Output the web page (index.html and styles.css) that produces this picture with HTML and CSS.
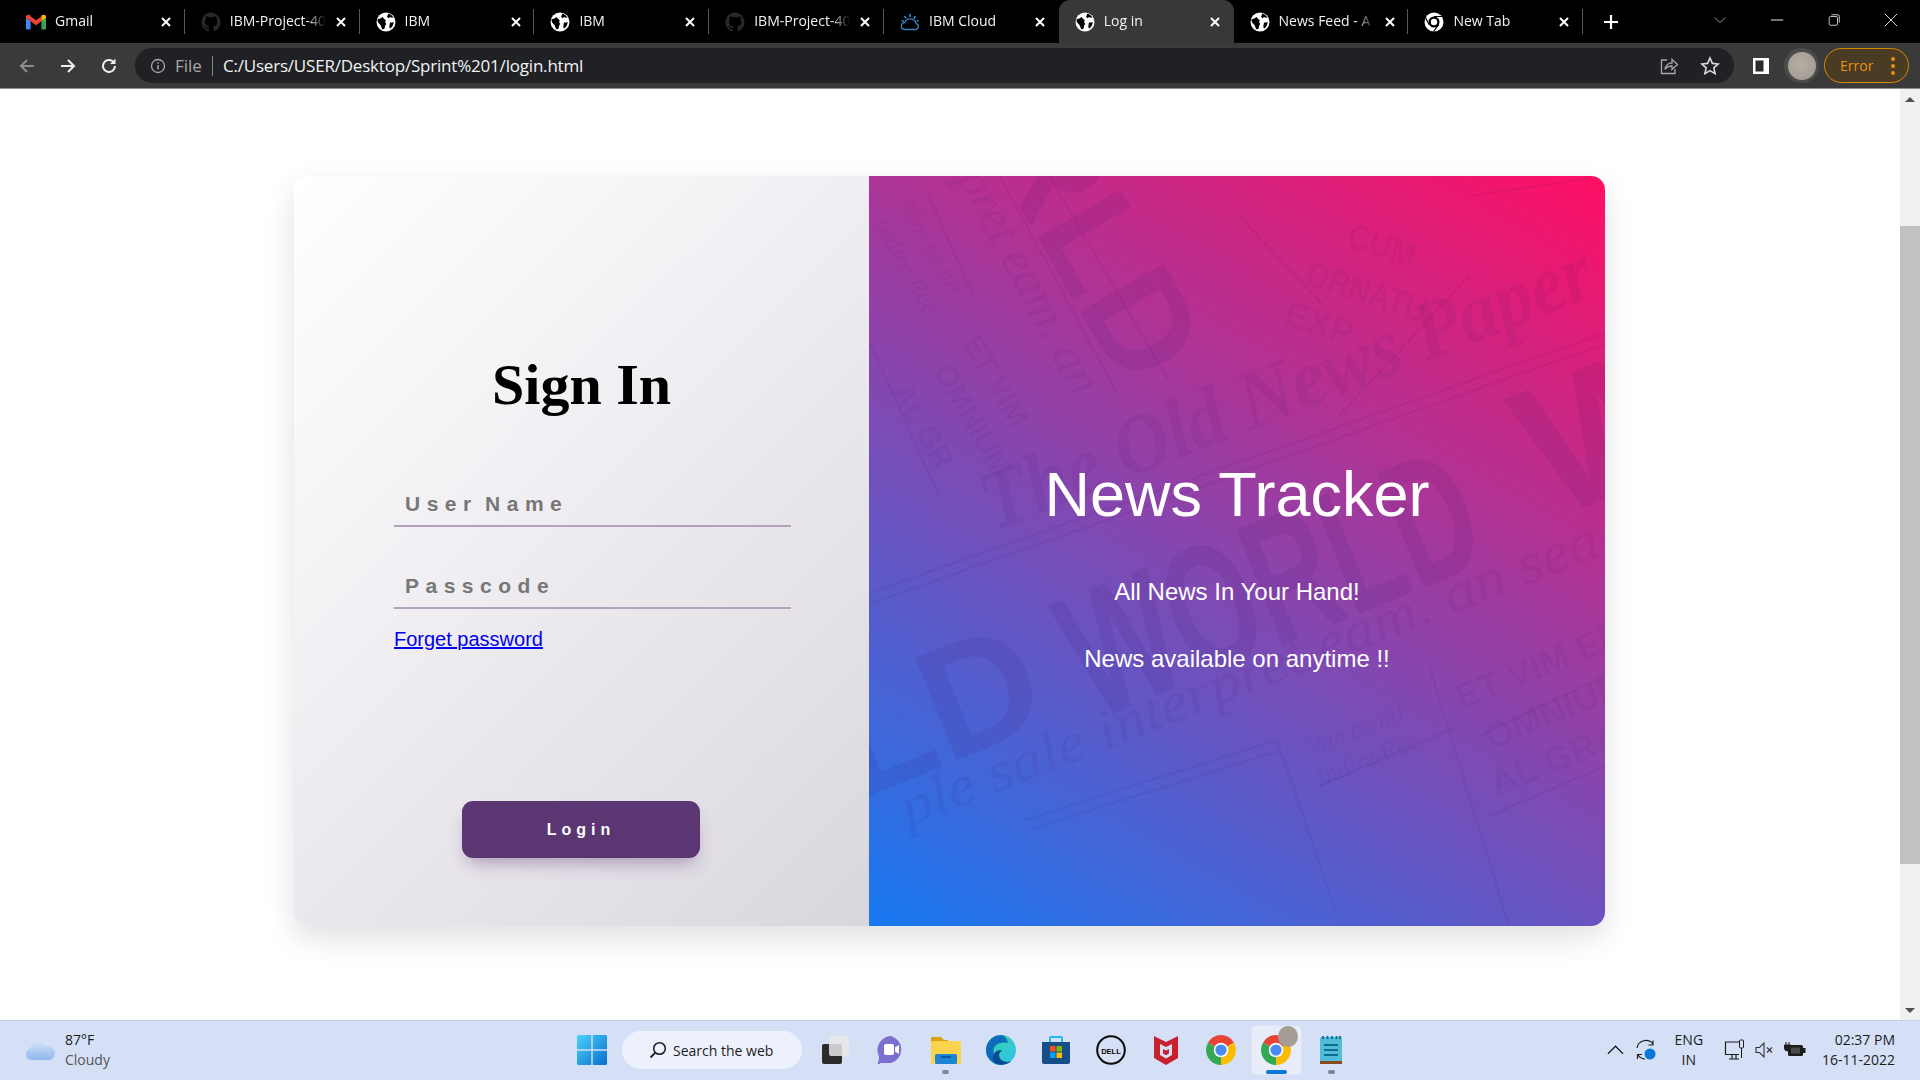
FILE: index.html
```html
<!DOCTYPE html>
<html lang="en">
<head>
<meta charset="utf-8">
<title>Log in</title>
<link rel="stylesheet" href="styles.css">
</head>
<body>
<svg class="defs" width="0" height="0" aria-hidden="true">
  <symbol id="globe" viewBox="0 0 20 20">
    <circle cx="10" cy="10" r="9.500" fill="#fff"/>
    <path fill="#000" d="M1.800 7c2 .5 3.400-1.200 5-2 .4 1.500 1.800 2.300 3 3.200-1 1.400-.6 2.800.6 3.800-1.500.6-1.200 2.600-1.800 4.600-.9.900-1.900.9-2.500.3-.9-2-1-4-3-5.400C1.500 10.300 1.300 8.200 1.800 7zM12.500 1.500c2 .7 3.800 2.200 4.800 4-1.300.4-2.400 0-3.300-.6l-1.400 1.300-1.600-1.500z"/>
    <path fill="#000" d="M14 10.500c1 .2 2.500 0 3.700-.5-.1 2.700-1.500 5-3.500 6.500-.7-.5-.9-1.500-.8-2.500.2-1.300.3-2.400.6-3.500z"/>
  </symbol>
  <symbol id="github" viewBox="0 0 20 20">
    <path fill="#24292e" d="M10 .5a9.700 9.700 0 0 0-3 18.900c.5.100.7-.2.7-.5v-1.700c-2.700.6-3.300-1.300-3.300-1.300-.4-1.100-1-1.400-1-1.400-.9-.6.100-.6.100-.6 1 .1 1.500 1 1.500 1 .9 1.500 2.300 1.100 2.800.8.100-.6.300-1.100.6-1.300-2.100-.3-4.400-1.100-4.400-4.800 0-1 .4-1.900 1-2.600-.1-.3-.4-1.300.1-2.600 0 0 .8-.3 2.700 1a9.300 9.300 0 0 1 4.800 0c1.900-1.300 2.700-1 2.700-1 .5 1.300.2 2.300.1 2.600.6.700 1 1.600 1 2.600 0 3.700-2.300 4.500-4.400 4.800.3.300.6.800.6 1.700v2.600c0 .3.200.6.700.5A9.700 9.700 0 0 0 10 .5z"/>
  </symbol>
  <symbol id="close" viewBox="0 0 12 12">
    <path d="M2 2l8 8M10 2l-8 8" stroke="#fff" stroke-width="2" fill="none"/>
  </symbol>
  <symbol id="chrome" viewBox="0 0 24 24">
    <path fill="#ea4335" d="M12 12 22.390 6A12 12 0 0 0 1.610 6z"/>
    <path fill="#34a853" d="M12 12 1.610 6A12 12 0 0 0 12 24z"/>
    <path fill="#fbbc04" d="M12 12 12 24A12 12 0 0 0 22.390 6z"/>
    <circle cx="12" cy="12" r="5.800" fill="#fff"/>
    <circle cx="12" cy="12" r="4.500" fill="#4a8af4"/>
  </symbol>
</svg>

<div class="browser">
  <div class="tabstrip">
    <div class="tab">
      <svg class="fav" viewBox="0 0 24 18"><path fill="#4285f4" d="M0 3v13.500A1.500 1.500 0 0 0 1.500 18H5.500V8z"/><path fill="#34a853" d="M24 3v13.500a1.500 1.500 0 0 1-1.500 1.500H18.500V8z"/><path fill="#ea4335" d="M5.500 8 12 12.800 18.500 8V2L12 6.800 5.500 2zM0 3c0-2.500 3-3.500 5-2l.5.400V8L0 4z"/><path fill="#fbbc04" d="M24 3c0-2.500-3-3.500-5-2l-.5.400V8L24 4z"/></svg>
      <span class="tab-title">Gmail</span>
      <svg class="tab-x"><use href="#close"/></svg>
    </div>
    <div class="tab">
      <svg class="fav"><use href="#github"/></svg>
      <span class="tab-title">IBM-Project-40</span>
      <svg class="tab-x"><use href="#close"/></svg>
    </div>
    <div class="tab">
      <svg class="fav"><use href="#globe"/></svg>
      <span class="tab-title">IBM</span>
      <svg class="tab-x"><use href="#close"/></svg>
    </div>
    <div class="tab">
      <svg class="fav"><use href="#globe"/></svg>
      <span class="tab-title">IBM</span>
      <svg class="tab-x"><use href="#close"/></svg>
    </div>
    <div class="tab">
      <svg class="fav"><use href="#github"/></svg>
      <span class="tab-title">IBM-Project-40</span>
      <svg class="tab-x"><use href="#close"/></svg>
    </div>
    <div class="tab tab-before-active">
      <svg class="fav" viewBox="0 0 20 20"><g fill="none" stroke-width="1.300"><path d="M4 17.500h11.500a3 3 0 0 0 .6-5.900 6 6 0 0 0-11.400-1A3.500 3.500 0 0 0 4 17.500z" stroke="#3e7cc0"/><path d="M10 2v3M4.500 4l1.500 2.400M15.500 4 14 6.400M1.500 8.500l2.500 1M18.500 8.500l-2 1" stroke="#33b1ff"/></g></svg>
      <span class="tab-title">IBM Cloud</span>
      <svg class="tab-x"><use href="#close"/></svg>
    </div>
    <div class="tab tab-active">
      <svg class="fav"><use href="#globe"/></svg>
      <span class="tab-title">Log in</span>
      <svg class="tab-x"><use href="#close"/></svg>
    </div>
    <div class="tab">
      <svg class="fav"><use href="#globe"/></svg>
      <span class="tab-title">News Feed - A</span>
      <svg class="tab-x"><use href="#close"/></svg>
    </div>
    <div class="tab">
      <svg class="fav" viewBox="0 0 20 20"><circle cx="10" cy="10" r="9.500" fill="#fff"/><circle cx="10" cy="10" r="5.500" fill="#000"/><circle cx="10" cy="10" r="3.200" fill="#fff"/><path d="M10 4.500h8.500M5.200 12.700 1.500 5.500M14.800 12.700 9.500 19.500" stroke="#000" stroke-width="1.200"/></svg>
      <span class="tab-title">New Tab</span>
      <svg class="tab-x"><use href="#close"/></svg>
    </div>
    <svg class="new-tab" viewBox="0 0 16 16"><path d="M8 1v14M1 8h14" stroke="#fff" stroke-width="2.200"/></svg>
    <div class="window-controls">
      <svg class="win-ico" viewBox="0 0 16 16"><path d="M2 5l6 6 6-6" fill="none" stroke="#b0b0b0"/></svg>
      <svg class="win-ico" viewBox="0 0 16 16"><path d="M1 8h14" stroke="#ddd" stroke-width="1.200"/></svg>
      <svg class="win-ico" viewBox="0 0 16 16"><rect x="2.500" y="4" width="9.500" height="10" rx="1.500" fill="none" stroke="#ddd"/><path d="M5 2h7.500A1.500 1.500 0 0 1 14 3.500V11" fill="none" stroke="#ddd"/></svg>
      <svg class="win-ico" viewBox="0 0 16 16"><path d="M1 1l14 14M15 1 1 15" stroke="#ddd" stroke-width="1.100"/></svg>
    </div>
  </div>

  <div class="toolbar">
    <svg class="nav-ico" viewBox="0 0 18 18"><path d="M16 9H3M9 3 3 9l6 6" fill="none" stroke="#8c8c8c" stroke-width="2"/></svg>
    <svg class="nav-ico" viewBox="0 0 18 18"><path d="M2 9h13M9 3l6 6-6 6" fill="none" stroke="#eee" stroke-width="2"/></svg>
    <svg class="nav-ico" viewBox="0 0 18 18"><path d="M15 9a6 6 0 1 1-1.800-4.300" fill="none" stroke="#eee" stroke-width="2"/><path d="M15.500 1.500v5.500H10z" fill="#eee"/></svg>
    <div class="omnibox">
      <svg class="info-ico" viewBox="0 0 16 16"><circle cx="8" cy="8" r="6.500" fill="none" stroke="#a8a8a8" stroke-width="1.300"/><path d="M8 7v4.500M8 4.200v1.600" stroke="#a8a8a8" stroke-width="1.500"/></svg>
      <span class="file-label">File</span>
      <span class="url-sep"></span>
      <span class="url">C:/Users/USER/Desktop/Sprint%201/login.html</span>
      <svg class="omni-ico" viewBox="0 0 20 20"><path d="M8 4H2.500v13.500H16V13" fill="none" stroke="#a8a8a8" stroke-width="1.300"/><path d="M6 13.500c.5-4 3.500-6.500 7-6.500V3.500l5.500 5-5.500 5V10c-3 0-5.500 1-7 3.500z" fill="none" stroke="#a8a8a8" stroke-width="1.300"/></svg>
      <svg class="omni-ico" viewBox="0 0 20 20"><path d="M10 2l2.400 5.400 5.800.6-4.400 3.900 1.300 5.700L10 14.600l-5.100 3 1.300-5.700L1.800 8l5.800-.6z" fill="none" stroke="#dcdcdc" stroke-width="1.600"/></svg>
    </div>
    <svg class="side-ico" viewBox="0 0 18 18"><rect x="1" y="1" width="16" height="16" fill="#fff"/><rect x="3.500" y="3.500" width="8" height="11" fill="#2b2b2b"/></svg>
    <div class="avatar-ring"><div class="avatar"></div></div>
    <div class="error-pill">
      <span>Error</span>
      <i class="dots"></i>
    </div>
  </div>

  <div class="viewport">
    <main class="page">
      <div class="card">
        <section class="signin">
          <h1 class="signin-title">Sign In</h1>
          <form class="signin-form">
            <input class="field" type="text" placeholder="User Name">
            <input class="field field-second" type="password" placeholder="Passcode">
            <a class="forgot" href="#">Forget password</a>
            <button class="login-btn" type="button">Login</button>
          </form>
        </section>
        <section class="promo">
          <svg class="paper" viewBox="0 0 736 750" aria-hidden="true">
            <g class="p-lines">
              <path d="M0 417 736 157M0 428 736 168M131 0 248 217M60 20 104 120M0 165 70 320M408 564 156 644M408 564 466 734M410 575 165 652M180 0 300 205M560 490 640 750M610 560 736 500M620 640 736 590M370 40 455 130M600 20 736 0M470 240 600 100M450 610 590 550"/>
            </g>
            <g class="p-ink">
              <text class="p-bold" font-size="140" text-anchor="end" transform="translate(257 215) rotate(60)">WORLD</text>
              <text class="p-bold" font-size="180" textLength="430" lengthAdjust="spacingAndGlyphs" transform="translate(225 545) rotate(-22)">WORLD</text>
              <text class="p-bold" font-size="160" text-anchor="end" transform="translate(185 545) rotate(-22)">RLD</text>
              <text class="p-bold" font-size="190" transform="translate(683 345) rotate(-22)">WORLD</text>
            </g>
            <g class="p-ink-light">
              <text class="p-gothic" font-size="84" textLength="650" lengthAdjust="spacingAndGlyphs" transform="translate(125 355) rotate(-21.400)">The Old News Paper</text>
              <text class="p-cond" font-size="36" textLength="70" lengthAdjust="spacingAndGlyphs" transform="translate(476 70) rotate(18)">CUM</text>
              <text class="p-cond" font-size="36" textLength="125" lengthAdjust="spacingAndGlyphs" transform="translate(434 108) rotate(18)">ORNATU</text>
              <text class="p-cond" font-size="36" textLength="70" lengthAdjust="spacingAndGlyphs" transform="translate(413 148) rotate(18)">EXP</text>
              <text class="p-serif" font-size="50" text-anchor="end" transform="translate(205 222) rotate(62)">pret eam. an</text>
              <text class="p-serif" font-size="26" transform="translate(30 31) rotate(60)">Vim ex nil</text>
              <text class="p-serif" font-size="26" transform="translate(3 47) rotate(60)">Indire Ree</text>
              <text class="p-cond" font-size="30" transform="translate(93 167) rotate(60)">ET VIM</text>
              <text class="p-cond" font-size="30" transform="translate(64 195) rotate(60)">OMNIUM</text>
              <text class="p-cond" font-size="30" transform="translate(22 215) rotate(60)">AL GR</text>
              <text class="p-serif" font-size="56" textLength="747" lengthAdjust="spacingAndGlyphs" transform="translate(39 651) rotate(-21.400)">ple sale interpret eam. an sea</text>
              <text class="p-cond" font-size="36" transform="translate(592 534) rotate(-22)">ET VIM ELIT</text>
              <text class="p-cond" font-size="36" transform="translate(622 574) rotate(-22)">OMNIUM</text>
              <text class="p-cond" font-size="36" transform="translate(627 620) rotate(-22)">AL GRAEC</text>
              <text class="p-serif" font-size="26" transform="translate(441 581) rotate(-22)">Vim ex nil</text>
              <text class="p-serif" font-size="26" transform="translate(451 611) rotate(-22)">Indire Ree</text>
            </g>
          </svg>
          <h2 class="promo-title">News Tracker</h2>
          <p class="promo-line">All News In Your Hand!</p>
          <p class="promo-line promo-line-second">News available on anytime !!</p>
        </section>
      </div>
    </main>
    <div class="scrollbar">
      <span class="arrow-up"></span>
      <span class="thumb"></span>
      <span class="arrow-down"></span>
    </div>
  </div>

  <footer class="taskbar">
    <div class="weather">
      <svg class="cloud" viewBox="0 0 30 20"><defs><linearGradient id="cg" x1="0" y1="0" x2="0" y2="1"><stop offset="0" stop-color="#cfe0fa"/><stop offset="1" stop-color="#8fb6ec"/></linearGradient></defs><path fill="url(#cg)" d="M6 20a6 6 0 0 1-1.500-11.800A8 8 0 0 1 19 6a7 7 0 0 1 5 14z"/></svg>
      <div class="weather-text">
        <span class="temp">87°F</span>
        <span class="cond">Cloudy</span>
      </div>
    </div>
    <div class="task-center">
      <svg class="start" viewBox="0 0 30 30"><defs><linearGradient id="wg" x1="0" y1="0" x2="1" y2="1"><stop offset="0" stop-color="#4dd0fa"/><stop offset="1" stop-color="#0670cf"/></linearGradient></defs><path fill="url(#wg)" d="M0 1.500A1.500 1.500 0 0 1 1.500 0H14.300V14.300H0zM15.700 0H28.500A1.500 1.500 0 0 1 30 1.500V14.300H15.700zM0 15.700H14.300V30H1.500A1.500 1.500 0 0 1 0 28.500zM15.700 15.700H30V28.500A1.500 1.500 0 0 1 28.500 30H15.700z"/></svg>
      <div class="search">
        <svg class="search-ico" viewBox="0 0 18 18"><circle cx="10.500" cy="7.500" r="5.800" fill="none" stroke="#1c1c1c" stroke-width="1.500"/><path d="M6.300 11.700 1.500 16.500" stroke="#1c1c1c" stroke-width="1.800"/></svg>
        <span>Search the web</span>
      </div>
      <div class="apps">
        <div class="app">
          <svg class="app-ico" viewBox="0 0 30 30"><rect x="1" y="9" width="20" height="20" rx="2" fill="#2b2b2b"/><rect x="8" y="1" width="20" height="20" rx="2" fill="#e8e8e8" fill-opacity=".85"/></svg>
        </div>
        <div class="app">
          <svg class="app-ico" viewBox="0 0 30 30"><path fill="#7b6fd0" d="M15 1a14 14 0 0 1 0 27H4.500c-1 1.500-2.500 1.500-3 .5 1-1.500 1.500-4 1.500-7A14 14 0 0 1 15 1z"/><rect x="8" y="9" width="10" height="11" rx="2" fill="#fff"/><path d="M19 12.500 23 10v9l-4-2.500z" fill="#fff"/></svg>
        </div>
        <div class="app app-open">
          <svg class="app-ico" viewBox="0 0 30 30"><path fill="#d9a10b" d="M0 3a1 1 0 0 1 1-1h9l3 3h4v5H0z"/><rect y="6" width="30" height="23" rx="1" fill="#fbd34d"/><rect x="4" y="19" width="22" height="10" rx="1.500" fill="#1d84d6"/><rect x="10" y="21" width="10" height="2" fill="#0d5aa0"/></svg>
        </div>
        <div class="app">
          <svg class="app-ico" viewBox="0 0 30 30"><defs><linearGradient id="eg" x1="0" y1="0" x2="1" y2="1"><stop offset="0" stop-color="#2fd5a0"/><stop offset="1" stop-color="#35c1f1"/></linearGradient></defs><circle cx="15" cy="15" r="15" fill="url(#eg)"/><path fill="#0f6cbd" d="M15 0A15 15 0 0 0 8 28.300c5 2.800 12 2.300 17-2-6 2-12-1-12-6 0-2 1-3.500 3-4.500-4-1-7 1-8 4C6 12 11 6 22 8 21 3 18 0 15 0z"/><path fill="#0a4a94" d="M13 20c0 6 7 8.500 12 6-3 3-8 4-13 3C8 28 5 24 8 19.500c1-3 4-5 8-4-2 1-3 2.500-3 4.500z"/></svg>
        </div>
        <div class="app">
          <svg class="app-ico" viewBox="0 0 30 30"><path d="M9 8V3a1 1 0 0 1 1-1h10a1 1 0 0 1 1 1v5" fill="none" stroke="#27b6e8" stroke-width="2"/><path fill="#174e8a" d="M1 7h28v20a2 2 0 0 1-2 2H3a2 2 0 0 1-2-2z"/><rect x="9" y="11" width="5.500" height="5.500" fill="#f25022"/><rect x="15.500" y="11" width="5.500" height="5.500" fill="#7fba00"/><rect x="9" y="17.500" width="5.500" height="5.500" fill="#00a4ef"/><rect x="15.500" y="17.500" width="5.500" height="5.500" fill="#ffb900"/></svg>
        </div>
        <div class="app">
          <svg class="app-ico" viewBox="0 0 30 30"><circle cx="15" cy="15" r="13.800" fill="none" stroke="#0a0a0a" stroke-width="2"/><text class="dell-word" x="15" y="18.500" text-anchor="middle">DELL</text></svg>
        </div>
        <div class="app">
          <svg class="app-ico" viewBox="0 0 30 30"><path fill="#c8202f" d="M3 1l12 6 12-6v22L15 30 3 23z"/><path fill="#d6e1f6" d="M9 9l6 3 6-3v11l-6 3.500L9 20z"/><path fill="#c8202f" d="M12 14l3 1.500 3-1.500v4.500l-3 1.800-3-1.800z"/></svg>
        </div>
        <div class="app">
          <svg class="app-ico"><use href="#chrome"/></svg>
        </div>
        <div class="app app-active">
          <svg class="app-ico"><use href="#chrome"/></svg>
          <span class="badge-circle"></span>
        </div>
        <div class="app app-open">
          <svg class="app-ico" viewBox="0 0 30 30"><rect x="4" y="2" width="22" height="26" rx="2" fill="#4fbcd8"/><path d="M4 26h22v3H4z" fill="#8a4b1c"/><path d="M8 10h14M8 15h14M8 20h14" stroke="#0e6a8f" stroke-width="2"/><path d="M7 1v3M11.500 1v3M16 1v3M20.500 1v3M24 1v3" stroke="#0e6a8f" stroke-width="1.800"/></svg>
        </div>
      </div>
    </div>
    <div class="tray">
      <svg class="tray-chev" viewBox="0 0 18 10"><path d="M1 9l8-8 8 8" fill="none" stroke="#1c1c1c" stroke-width="1.300"/></svg>
      <svg class="tray-sync" viewBox="0 0 22 22"><path d="M2 9a9 9 0 0 1 16-4M18 1.500V6h-4.500M10 20a9 9 0 0 1-7-4M2.500 20v-4.500H7" fill="none" stroke="#1c1c1c" stroke-width="1.200"/><circle cx="15" cy="15" r="5.500" fill="#0a78d7"/></svg>
      <div class="lang"><span>ENG</span><span>IN</span></div>
      <svg class="tray-net" viewBox="0 0 22 22"><path d="M15 3H1.500v12.500H15M5 20h10M8 15.500V20M12 15.500V20" fill="none" stroke="#1c1c1c" stroke-width="1.200"/><rect x="15.500" y="1" width="4" height="8" rx="1" fill="#d5e0f6" stroke="#1c1c1c"/><path d="M17.500 9v10" stroke="#1c1c1c"/></svg>
      <svg class="tray-vol" viewBox="0 0 20 18"><path d="M1 6.500h3.500L9 2v14l-4.500-4.500H1z" fill="none" stroke="#333" stroke-width="1.100"/><path d="M12 6.500l5 5M17 6.500l-5 5" stroke="#333" stroke-width="1.100"/></svg>
      <svg class="tray-bat" viewBox="0 0 22 18"><rect x="4" y="4" width="15" height="11" rx="1.500" fill="#1c1c1c"/><rect x="19" y="7" width="2.500" height="5" fill="#1c1c1c"/><rect x="7" y="6.500" width="9" height="6" fill="#4a4a4a"/><path d="M2 1v3M5 1v3M.5 4h6v3a3 3 0 0 1-6 0z" fill="#1c1c1c" stroke="#1c1c1c"/></svg>
      <div class="clock"><span>02:37 PM</span><span>16-11-2022</span></div>
    </div>
  </footer>
</div>
</body>
</html>
```

FILE: styles.css
```css
* { box-sizing: border-box; }
html, body { margin: 0; height: 100%; overflow: hidden; background: #fff; }
.defs { position: absolute; }
.browser { display: flex; flex-direction: column; width: 1920px; height: 1080px; font-family: "Open Sans", "Noto Sans", sans-serif; }

/* tab strip */
.tabstrip { display: flex; align-items: center; height: 43px; padding-left: 10px; background: #000; flex: none; }
.tab { position: relative; display: flex; align-items: center; width: 174.8px; height: 43px; padding-left: 16px; color: #f1f3f4; font-size: 14px; flex: none; }
.tab::after { content: ""; position: absolute; right: 0; top: 9px; width: 1px; height: 25px; background: #5a5a5a; }
.tab-before-active::after, .tab-active::after { display: none; }
.tab-active { background: #383838; border-radius: 11px 11px 0 0; }
.fav { width: 20px; height: 20px; flex: none; }
.tab-title { width: 96px; margin: 0 0 2px 9px; white-space: nowrap; overflow: hidden; -webkit-mask-image: linear-gradient(to right, #000 80%, transparent); mask-image: linear-gradient(to right, #000 80%, transparent); }
.tab-x { width: 12px; height: 12px; margin-left: 9px; flex: none; }
.new-tab { width: 16px; height: 16px; margin-left: 20px; flex: none; }
.window-controls { display: flex; align-items: center; margin-left: auto; padding-right: 22px; gap: 43px; height: 43px; }
.win-ico { width: 14px; height: 14px; margin-bottom: 4px; }

/* toolbar */
.toolbar { display: flex; align-items: center; height: 46px; padding-left: 18px; background: #3a3a3a; border-bottom: 1px solid #8d8d8d; flex: none; }
.nav-ico { width: 18px; height: 18px; margin-right: 23px; flex: none; }
.omnibox { display: flex; align-items: center; width: 1599px; height: 35px; margin-left: -6px; padding-left: 15px; padding-right: 14px; background: #202124; border-radius: 18px; flex: none; }
.info-ico { width: 16px; height: 16px; flex: none; }
.file-label { margin-left: 9px; color: #a8a8a8; font-size: 17px; }
.url-sep { width: 1px; height: 20px; margin: 0 10px; background: #8a8a8a; }
.url { color: #f1f3f4; font-size: 17px; letter-spacing: -.2px; white-space: nowrap; }
.omni-ico { width: 20px; height: 20px; margin-left: 21px; flex: none; }
.url + .omni-ico { margin-left: auto; }
.side-ico { width: 18px; height: 18px; margin-left: 18px; flex: none; }
.avatar-ring { display: flex; align-items: center; justify-content: center; width: 35px; height: 35px; margin-left: 14px; background: #4b4b4b; border-radius: 50%; flex: none; }
.avatar { width: 28px; height: 28px; background: radial-gradient(circle at 45% 45%, #b5afa6, #9c968e); border-radius: 50%; }
.error-pill { display: flex; align-items: center; justify-content: space-between; width: 85px; height: 35px; margin-left: 5px; padding: 0 13px 0 15px; background: #4a3b25; border: 1.500px solid #d98800; border-radius: 18px; color: #e8920c; font-size: 14px; flex: none; }
.dots { width: 4px; height: 4px; border-radius: 50%; background: #e8920c; box-shadow: 0 -7px 0 #e8920c, 0 7px 0 #e8920c; }

/* page */
.viewport { display: flex; flex: 1; min-height: 0; background: #fff; }
.page { flex: 1; padding: 87px 0 0 294px; }
.card { display: flex; width: 1311px; height: 750px; border-radius: 14px; box-shadow: 0 12px 30px rgba(0, 0, 0, .12); }
.signin { width: 575px; height: 750px; background: linear-gradient(135deg, #ffffff 0%, #efedf1 45%, #dad6de 100%); border-radius: 14px 0 0 14px; flex: none; }
.signin-title { margin: 179px 0 0; color: #000; font: bold 58px/60px "Liberation Serif", serif; text-align: center; }
.signin-form { display: flex; flex-direction: column; padding-left: 100px; }
.field { display: block; width: 397px; height: 44px; padding: 0 0 0 11px; background: transparent; border: 0; border-bottom: 2px solid #b3a2bd; outline: none; color: #333; font: bold 21px "Liberation Sans", sans-serif; letter-spacing: 6.5px; word-spacing: -5px; }
.field::placeholder { color: #777; opacity: 1; }
.signin-form .field:first-child { margin-top: 68px; }
.field-second { margin-top: 38px; }
.forgot { align-self: flex-start; margin-top: 18px; color: #0000ee; font: 20px/24px "Liberation Sans", sans-serif; }
.login-btn { width: 238px; height: 57px; margin: 150px 0 0 68px; align-self: flex-start; background: #5a3673; border: 0; border-radius: 11px; box-shadow: 0 10px 18px -6px rgba(90, 54, 115, .45); color: #fff; font: bold 16px "Liberation Sans", sans-serif; letter-spacing: 5px; }

.promo { position: relative; width: 736px; height: 750px; overflow: hidden; padding-top: 282px; background: linear-gradient(30deg, #1779f2 0%, #ff0f64 100%); border-radius: 0 14px 14px 0; color: #fff; font-family: "Liberation Sans", sans-serif; text-align: center; flex: none; }
.paper { position: absolute; left: 0; top: 0; width: 736px; height: 750px; }
.p-lines path { fill: none; stroke: #3a0a60; stroke-opacity: .08; stroke-width: 2; }
.p-ink { fill: #3a0a60; fill-opacity: .09; }
.p-ink-light { fill: #3a0a60; fill-opacity: .08; }
.p-bold { font-family: "Liberation Sans", sans-serif; font-weight: bold; }
.p-gothic { font-family: "Liberation Serif", serif; font-weight: bold; font-style: italic; }
.p-serif { font-family: "Liberation Serif", serif; font-style: italic; }
.p-cond { font-family: "Liberation Sans Narrow", "Liberation Sans", sans-serif; font-weight: bold; }
.promo-title { position: relative; margin: 0; font: normal 63px/72px "Liberation Sans", sans-serif; }
.promo-line { position: relative; margin: 47px 0 0; font-size: 24px; line-height: 30px; }
.promo-line-second { margin-top: 37px; }

/* scrollbar */
.scrollbar { display: flex; flex-direction: column; align-items: center; width: 20px; background: #f1f1f1; flex: none; }
.arrow-up { width: 0; height: 0; margin-top: 8px; border: 5px solid transparent; border-top: 0; border-bottom: 5px solid #505050; }
.thumb { width: 100%; height: 638px; margin-top: 124px; background: #c1c1c1; }
.arrow-down { width: 0; height: 0; margin-top: auto; margin-bottom: 7px; border: 5px solid transparent; border-bottom: 0; border-top: 5px solid #505050; }

/* taskbar */
.taskbar { position: relative; display: flex; align-items: center; height: 60px; padding-bottom: 1px; background: #d5e0f6; border-top: 1px solid #c3cfe8; flex: none; }
.weather { display: flex; align-items: center; width: 577px; padding-left: 26px; flex: none; }
.cloud { width: 30px; height: 20px; flex: none; }
.weather-text { display: flex; flex-direction: column; margin-left: 9px; font-size: 14px; line-height: 20px; }
.temp { color: #1c1c1c; }
.cond { color: #555; }
.task-center { display: flex; align-items: center; flex: none; }
.start { width: 30px; height: 30px; flex: none; }
.search { display: flex; align-items: center; width: 180px; height: 38px; margin-left: 15px; padding-left: 27px; background: #edf1fb; border-radius: 19px; color: #1c1c1c; font-size: 14px; flex: none; }
.search-ico { width: 18px; height: 18px; margin-right: 6px; flex: none; }
.apps { display: flex; margin-left: 6px; }
.app { position: relative; display: flex; align-items: center; justify-content: center; width: 55.100px; height: 48px; }
.app-ico { width: 30px; height: 30px; }
.app-open::after { content: ""; position: absolute; bottom: 0; left: 24px; width: 7px; height: 4px; background: #7c8698; border-radius: 2px; }
.app-active { background: #e8edf9; border-radius: 4px; box-shadow: 0 0 0 1px #dde4f3; width: 49px; margin: 0 3px; }
.app-active::after { content: ""; position: absolute; bottom: 0; left: 14px; width: 21px; height: 4px; background: #0a78d7; border-radius: 2px; }
.badge-circle { position: absolute; left: 26px; top: 0; width: 20px; height: 21px; background: #a39d95; border-radius: 50%; }
.dell-word { font: bold 7.500px "Liberation Sans", sans-serif; fill: #0a0a0a; }

.tray { position: relative; display: flex; align-items: center; flex: 1; height: 100%; color: #1c1c1c; font-size: 14px; }
.tray-chev { width: 17px; height: 10px; margin-left: 248px; flex: none; }
.tray-sync { width: 22px; height: 22px; margin-left: 11px; flex: none; }
.lang { display: flex; flex-direction: column; align-items: center; width: 34px; margin-left: 15px; line-height: 20px; flex: none; }
.tray-net { width: 22px; height: 22px; margin-left: 18px; flex: none; }
.tray-vol { width: 20px; height: 18px; margin-left: 9px; flex: none; }
.tray-bat { width: 22px; height: 18px; margin-left: 9px; flex: none; }
.clock { display: flex; flex-direction: column; align-items: flex-end; margin-left: auto; margin-right: 25px; line-height: 20px; white-space: nowrap; }
```
